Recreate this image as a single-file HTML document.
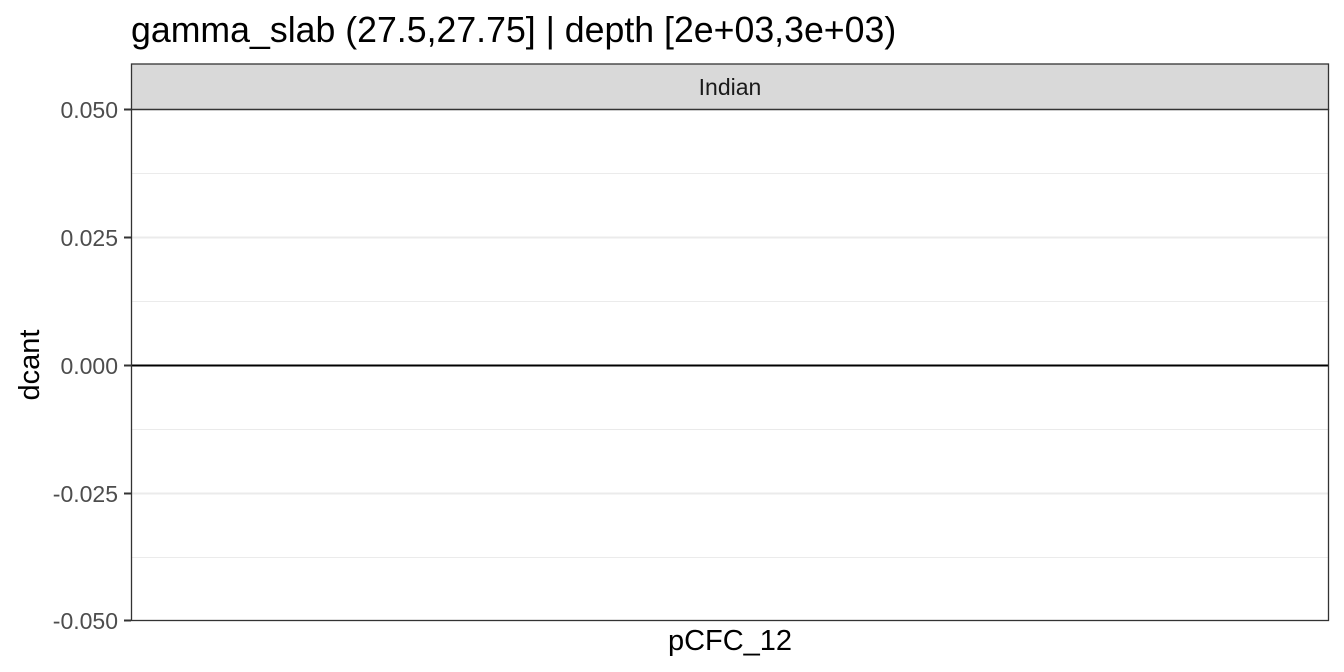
<!DOCTYPE html>
<html><head><style>body{margin:0;background:#fff}svg{display:block}</style></head><body>
<svg width="1344" height="672" xmlns="http://www.w3.org/2000/svg" font-family="Liberation Sans, sans-serif">
<rect width="1344" height="672" fill="#fff"/>
<text x="131" y="42" font-size="35.7" fill="#000">gamma_slab (27.5,27.75] | depth [2e+03,3e+03)</text>
<g stroke="#ebebeb" stroke-width="1">
<line x1="132" x2="1328" y1="173.5" y2="173.5"/><line x1="132" x2="1328" y1="301.5" y2="301.5"/>
<line x1="132" x2="1328" y1="429.5" y2="429.5"/><line x1="132" x2="1328" y1="557.5" y2="557.5"/>
</g>
<g stroke="#ebebeb" stroke-width="2">
<line x1="132" x2="1328" y1="237.5" y2="237.5"/><line x1="132" x2="1328" y1="493.5" y2="493.5"/>
</g>
<line x1="132" x2="1328" y1="365.5" y2="365.5" stroke="#000" stroke-width="2"/>
<rect x="131.5" y="64" width="1197" height="45.5" fill="#d9d9d9" stroke="#333" stroke-width="1.3"/>
<text x="730" y="95" font-size="23" fill="#1a1a1a" text-anchor="middle">Indian</text>
<rect x="131.5" y="109.5" width="1197" height="511" fill="none" stroke="#333" stroke-width="1.3"/>
<g stroke="#333" stroke-width="2">
<line x1="124" x2="131" y1="109.5" y2="109.5"/><line x1="124" x2="131" y1="237.5" y2="237.5"/>
<line x1="124" x2="131" y1="365.5" y2="365.5"/><line x1="124" x2="131" y1="493.5" y2="493.5"/>
<line x1="124" x2="131" y1="620.5" y2="620.5"/>
</g>
<g font-size="23" fill="#4d4d4d" text-anchor="end">
<text x="118" y="118">0.050</text><text x="118" y="246">0.025</text><text x="118" y="374">0.000</text>
<text x="118" y="502">-0.025</text><text x="118" y="629">-0.050</text>
</g>
<text x="730" y="650" font-size="29" fill="#000" text-anchor="middle">pCFC_12</text>
<text transform="translate(39,365) rotate(-90)" font-size="29" fill="#000" text-anchor="middle">dcant</text>
</svg>
</body></html>
